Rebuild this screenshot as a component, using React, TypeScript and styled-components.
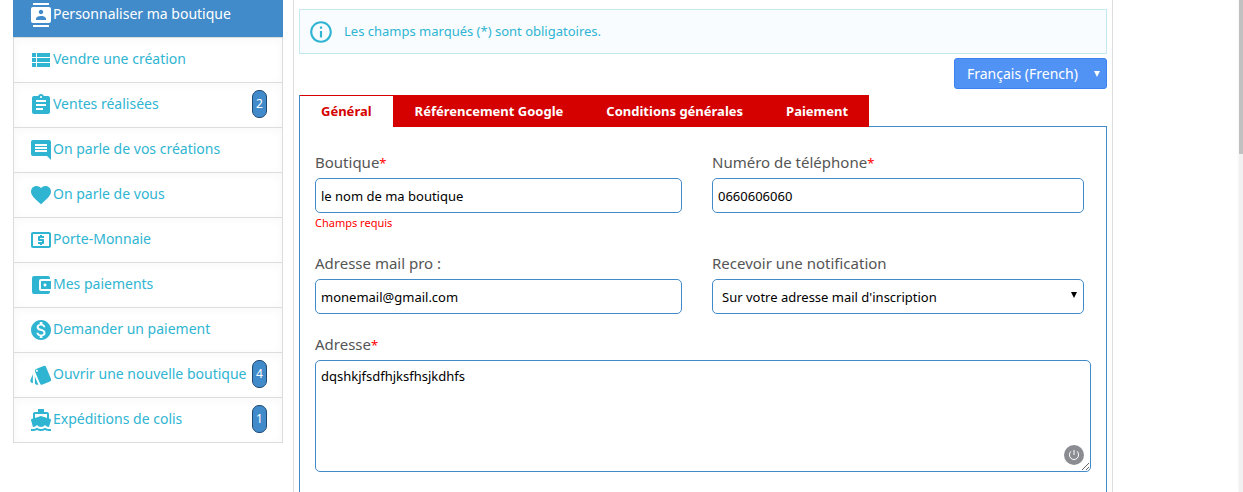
import React, { useState } from "react";
import styled, { createGlobalStyle } from "styled-components";
import {
  MdAccountBalanceWallet,
  MdAssignment,
  MdComment,
  MdContacts,
  MdDirectionsBoat,
  MdFavorite,
  MdInfoOutline,
  MdLocalAtm,
  MdMonetizationOn,
  MdStyle,
  MdViewList,
} from "react-icons/md";
import type { IconType } from "react-icons";

const colors = {
  primary: "#428bca",
  accent: "#2fb5d2",
  red: "#d50000",
  line: "#dddddd",
};

const GlobalStyle = createGlobalStyle`
  *, *::before, *::after { box-sizing: border-box; }
  body {
    margin: 0;
    background: #fff;
    font-family: "Noto Sans", sans-serif;
    font-size: 14px;
    line-height: 20px;
    color: #555;
  }
  input, select, textarea, button { font-family: inherit; margin: 0; }
`;

const Page = styled.div`
  display: flex;
  align-items: stretch;
  min-height: 100vh;
  overflow: hidden;
`;

const Container = styled.div`
  flex: 1;
  display: flex;
  gap: 10px;
  padding: 0 126px 0 13px;
  min-width: 0;
`;

const Menu = styled.nav`
  flex: 0 0 270px;
  margin-top: -8px;
`;

const MenuItem = styled.a<{ $active?: boolean }>`
  display: flex;
  align-items: center;
  height: 46px;
  margin-bottom: -1px;
  padding: 0 15px;
  border: 1px solid ${(p) => (p.$active ? colors.primary : colors.line)};
  background: ${(p) => (p.$active ? colors.primary : "#fff")};
  box-shadow: ${(p) => (p.$active ? "none" : "inset 0 2px 10px rgba(0, 0, 0, 0.03)")};
  color: ${(p) => (p.$active ? "#fff" : colors.accent)};
  text-decoration: none;
  white-space: nowrap;

  svg { flex: none; }
`;

const MenuLabel = styled.span`
  flex: 1;
  padding-bottom: 3px;
`;

const Badge = styled.span`
  width: 15px;
  height: 28px;
  margin-bottom: 2px;
  border: 1px solid #1f4a75;
  border-radius: 7px;
  background: ${colors.primary};
  color: #fff;
  font-size: 12px;
  line-height: 26px;
  text-align: center;
`;

const Main = styled.main`
  flex: 1;
  min-width: 0;
  display: flex;
  flex-direction: column;
  padding: 9px 5px 0;
  border: solid ${colors.line};
  border-width: 0 1px;
`;

const Notice = styled.div`
  display: flex;
  align-items: center;
  gap: 10px;
  height: 45px;
  padding: 0 8px;
  border: 1px solid #c5e9f1;
  background: #f8fcff;
  color: ${colors.accent};
  font-size: 13px;
`;

const NoticeText = styled.span`
  padding-bottom: 2px;
`;

const Toolbar = styled.div`
  display: flex;
  justify-content: flex-end;
  padding: 4px 0 6px;
`;

const SelectWrap = styled.div`
  position: relative;
  display: flex;
`;

const Arrow = styled.svg`
  position: absolute;
  right: 7px;
  top: 12px;
  width: 6px;
  height: 7px;
  pointer-events: none;
`;

const LanguageSelect = styled.select`
  appearance: none;
  width: 153px;
  height: 31px;
  padding: 0 12px;
  border: 1px solid #3b82f0;
  border-radius: 3px;
  background: #5192f5;
  color: #fff;
  font-size: 14px;
`;

const TabBar = styled.div`
  position: relative;
  display: flex;
  align-self: flex-start;
  gap: 1px;
  margin-bottom: -1px;
  padding-top: 1px;
  border-left: 1px solid ${colors.primary};
  background: ${colors.red};
`;

const Tab = styled.button<{ $active: boolean }>`
  height: 31px;
  padding: 0 21px 2px;
  border: 0;
  background: ${(p) => (p.$active ? "#fff" : colors.red)};
  color: ${(p) => (p.$active ? colors.red : "#fff")};
  font-size: 13px;
  font-weight: 700;
  white-space: nowrap;
`;

const Panel = styled.form`
  flex: 1;
  display: flex;
  flex-direction: column;
  gap: 21px;
  padding: 26px 15px 20px;
  border: 1px solid ${colors.primary};
  border-bottom: 0;
`;

const FieldRow = styled.div`
  display: grid;
  grid-template-columns: 367fr 372fr;
  column-gap: 30px;
  padding-right: 7px;
`;

const Field = styled.div`
  display: flex;
  flex-direction: column;
  min-width: 0;
`;

const Label = styled.label`
  margin-bottom: 7px;
  font-size: 15px;
  line-height: 18px;
`;

const Star = styled.span`
  color: #f00;
  font-size: 13px;
  line-height: 1;
`;

const controlStyle = `
  width: 100%;
  border: 1px solid #428bca;
  border-radius: 5px;
  background: #fff;
  color: #000;
  font-size: 13px;
`;

const Input = styled.input`
  ${controlStyle}
  height: 35px;
  padding: 0 5px;
`;

const Select = styled.select`
  ${controlStyle}
  appearance: none;
  height: 35px;
  padding: 0 9px;
`;

const TextArea = styled.textarea`
  ${controlStyle}
  display: block;
  height: 112px;
  padding: 5px;
  line-height: 20px;
  resize: both;
`;

const TextAreaWrap = styled.div`
  position: relative;
`;

const PowerButton = styled.button`
  position: absolute;
  right: 7px;
  bottom: 7px;
  width: 20px;
  height: 20px;
  padding: 0;
  border: 0;
  border-radius: 50%;
  background: #8a8c91;

  svg { display: block; }
`;

const ErrorText = styled.span`
  color: #f00;
  font-size: 11px;
`;

const ScrollTrack = styled.div`
  flex: 0 0 4px;
  background: #f1f1f1;
  box-shadow: 0 0 3px rgba(0, 0, 0, 0.08);
`;

const ScrollThumb = styled.div`
  height: 154px;
  background: #c1c1c1;
`;

type Item = { label: string; icon: IconType; count?: number };

const items: Item[] = [
  { label: "Personnaliser ma boutique", icon: MdContacts },
  { label: "Vendre une création", icon: MdViewList },
  { label: "Ventes réalisées", icon: MdAssignment, count: 2 },
  { label: "On parle de vos créations", icon: MdComment },
  { label: "On parle de vous", icon: MdFavorite },
  { label: "Porte-Monnaie", icon: MdLocalAtm },
  { label: "Mes paiements", icon: MdAccountBalanceWallet },
  { label: "Demander un paiement", icon: MdMonetizationOn },
  { label: "Ouvrir une nouvelle boutique", icon: MdStyle, count: 4 },
  { label: "Expéditions de colis", icon: MdDirectionsBoat, count: 1 },
];

const tabs = ["Général", "Référencement Google", "Conditions générales", "Paiement"];

const DownArrow = ({ color }: { color: string }) => (
  <Arrow viewBox="0 0 6 7" aria-hidden="true">
    <path d="M0 1h6L3 7z" fill={color} />
  </Arrow>
);

export default function App() {
  const [tab, setTab] = useState(0);

  return (
    <>
      <GlobalStyle />
      <Page>
        <Container>
          <Menu aria-label="Ma boutique">
            {items.map(({ label, icon: Icon, count }, i) => (
              <MenuItem key={label} href="#" $active={i === 0}>
                <Icon size={24} />
                <MenuLabel>{label}</MenuLabel>
                {count && <Badge>{count}</Badge>}
              </MenuItem>
            ))}
          </Menu>

          <Main>
            <Notice role="note">
              <MdInfoOutline size={26} />
              <NoticeText>Les champs marqués (*) sont obligatoires.</NoticeText>
            </Notice>

            <Toolbar>
              <SelectWrap>
                <LanguageSelect aria-label="Langue">
                  <option>Français (French)</option>
                </LanguageSelect>
                <DownArrow color="#fff" />
              </SelectWrap>
            </Toolbar>

            <TabBar role="tablist">
              {tabs.map((name, i) => (
                <Tab
                  key={name}
                  type="button"
                  role="tab"
                  aria-selected={tab === i}
                  $active={tab === i}
                  onClick={() => setTab(i)}
                >
                  {name}
                </Tab>
              ))}
            </TabBar>

            <Panel>
              <FieldRow>
                <Field>
                  <Label htmlFor="shop">
                    Boutique<Star>*</Star>
                  </Label>
                  <Input id="shop" defaultValue="le nom de ma boutique" />
                  <ErrorText>Champs requis</ErrorText>
                </Field>
                <Field>
                  <Label htmlFor="phone">
                    Numéro de téléphone<Star>*</Star>
                  </Label>
                  <Input id="phone" type="tel" defaultValue="0660606060" />
                </Field>
              </FieldRow>
              <FieldRow>
                <Field>
                  <Label htmlFor="mail">Adresse mail pro :</Label>
                  <Input id="mail" type="email" defaultValue="monemail@gmail.com" />
                </Field>
                <Field>
                  <Label htmlFor="notify">Recevoir une notification</Label>
                  <SelectWrap>
                    <Select id="notify">
                      <option>Sur votre adresse mail d'inscription</option>
                    </Select>
                    <DownArrow color="#000" />
                  </SelectWrap>
                </Field>
              </FieldRow>
              <Field>
                <Label htmlFor="address">
                  Adresse<Star>*</Star>
                </Label>
                <TextAreaWrap>
                  <TextArea id="address" spellCheck={false} defaultValue="dqshkjfsdfhjksfhsjkdhfs" />
                  <PowerButton type="button" aria-label="Activer la correction">
                    <svg width="20" height="20" viewBox="0 0 20 20" fill="none" stroke="#fff">
                      <path d="M6.9 6.3A4.6 4.6 0 0 0 5.5 10a4.5 4.5 0 0 0 9 0a4.6 4.6 0 0 0-1.4-3.7M10 5v5" />
                    </svg>
                  </PowerButton>
                </TextAreaWrap>
              </Field>
            </Panel>
          </Main>
        </Container>
        <ScrollTrack>
          <ScrollThumb />
        </ScrollTrack>
      </Page>
    </>
  );
}
